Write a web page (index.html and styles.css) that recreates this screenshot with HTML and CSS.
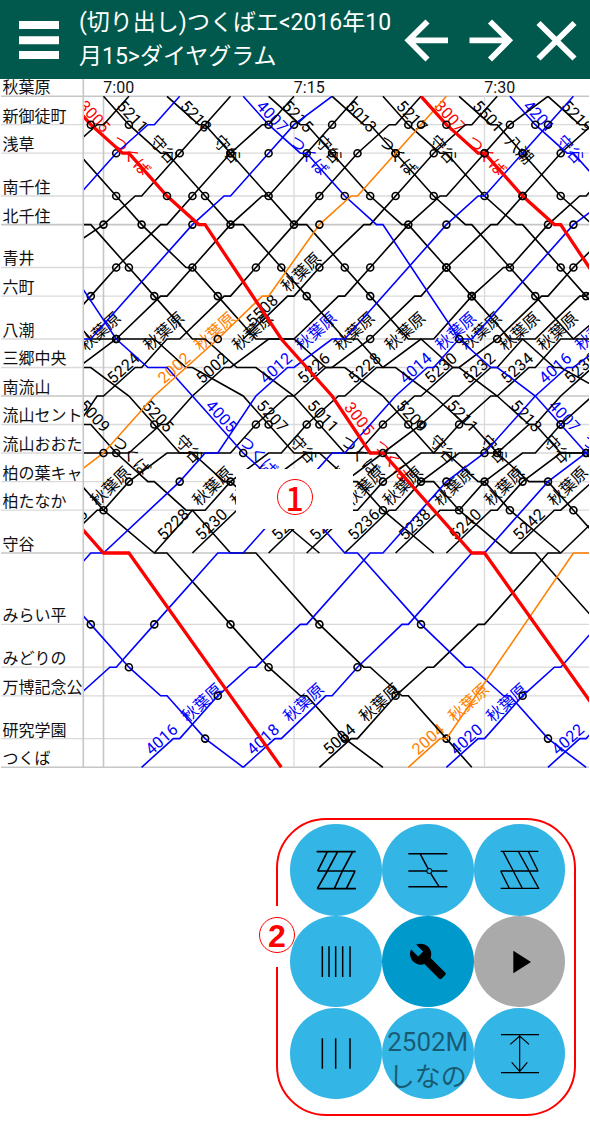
FILE: index.html
```html
<!DOCTYPE html>
<html lang="ja">
<head>
<meta charset="utf-8">
<title>ダイヤグラム</title>
<link rel="stylesheet" href="styles.css">
</head>
<body>
<header class="bar">
  <svg class="bar-menu" viewBox="0 0 40 38"><path d="M0 0h40v8H0zM0 15.2h40v8H0zM0 30h40v8H0z"/></svg>
  <h1 class="bar-title">(切り出し)つくばエ&lt;2016年10<br>月15&gt;ダイヤグラム</h1>
  <svg class="bar-icons" viewBox="0 0 186 78">
    <path d="M44 39.3H4M23.500 20.500L4.500 39.300 23.500 58.500M65.500 39.300H105M86 20.500L105 39.300 86 58.500M134.500 22L170.500 57.500M170.500 22L134.500 57.500"/>
  </svg>
</header>
<main class="page">
  <section class="chart">
    <svg id="diagram" class="diagram" viewBox="0 79 590 700"></svg>
    <div class="note"><span class="mark mark-one">1</span></div>
  </section>
  <section class="panel">
    <span class="panel-tag"><span class="mark mark-two">2</span></span>
    <div class="pad">
      <button class="key"><svg viewBox="0 0 275 275"><path stroke-width="5" d="M80 83H197M83 141H196M82 194H198M112 83L83 141M143 83L112 141 82 194M188 83L157 141 133 194M195 141L169 194"/></svg></button>
      <button class="key"><svg viewBox="0 0 275 275"><path stroke-width="4.500" d="M79 89H196M79 141H134M150 141H196M79 188H196M114 89L138 134M146 148L171 188"/><circle cx="142" cy="141" r="7.500" stroke-width="3"/></svg></button>
      <button class="key"><svg viewBox="0 0 275 275"><path stroke-width="4" d="M80 82H193M80 141H193M80 193H196M87 82L145 193M133 82L194 193M163 82L192 141M80 141L106 193"/></svg></button>
      <button class="key"><svg viewBox="0 0 275 275"><path stroke-width="4.500" d="M97 91V183M117 91V183M137 91V183M158 91V183M180 91V183"/></svg></button>
      <button class="key key-main"><svg viewBox="0 0 275 275"><path class="solid" transform="translate(79.500 77.500) scale(4.870)" d="M22.700 19l-9.100-9.100c.9-2.300.4-5-1.500-6.900-2-2-5-2.400-7.400-1.300L9 6 6 9 1.600 4.700C.4 7.100.9 10.100 2.900 12.100c1.900 1.900 4.600 2.400 6.900 1.500l9.100 9.100c.4.4 1 .4 1.400 0l2.300-2.300c.5-.4.5-1.100.1-1.400z"/></svg></button>
      <button class="key key-off"><svg viewBox="0 0 275 275"><path class="solid" d="M118 104V172L171 138z"/></svg></button>
      <button class="key"><svg viewBox="0 0 275 275"><path stroke-width="4.500" d="M97 91V182M137 91V182M180 91V182"/></svg></button>
      <button class="key key-text">2502M<br>しなの</button>
      <button class="key"><svg viewBox="0 0 275 275"><path stroke-width="3.500" d="M81 80H195M81 194H195M137 82V192M109 109L137 84 165 109M113 163L137 190 160 163"/></svg></button>
    </div>
  </section>
</main>
<script src="diagram.js"></script>
</body>
</html>
```

FILE: styles.css
```css
* { box-sizing: border-box; }
body {
  margin: 0;
  width: 590px;
  height: 1125px;
  overflow: hidden;
  background: #fff;
  font-family: Roboto, "Noto Sans CJK JP", sans-serif;
}
.bar {
  display: flex;
  align-items: center;
  height: 79px;
  background: #00594c;
  color: #fff;
}
.bar-menu { width: 40px; height: 38px; margin-left: 19px; fill: #fff; }
.bar-title {
  flex: 1;
  margin: 0 0 0 20px;
  padding-top: 1px;
  font-size: 23px;
  line-height: 34px;
  font-weight: 400;
  white-space: nowrap;
}
.bar-icons { width: 186px; height: 78px; flex: none; fill: none; stroke: #fff; stroke-width: 5.800; }
.chart { position: relative; height: 700px; }
.diagram { display: block; width: 590px; height: 700px; font-size: 16px; }
.diagram polyline { fill: none; stroke-width: 1.600; }
.diagram .express { stroke-width: 3.300; }
.diagram .stop { fill: none; stroke: #000; stroke-width: 1.600; }
.grid { stroke: #dadada; stroke-width: 1.300; }
.grid-strong { stroke: #c6c6c6; stroke-width: 1.600; }
.station { fill: #111; }
.note {
  position: absolute;
  left: 236px;
  top: 390px;
  width: 117px;
  height: 60px;
  display: flex;
  justify-content: center;
  padding-top: 10px;
  background: #fff;
}
.mark {
  display: flex;
  flex: none;
  align-items: center;
  justify-content: center;
  width: 36px;
  height: 36px;
  border: 1.500px solid #f00;
  border-radius: 50%;
  color: #f00;
  font-size: 32px;
  line-height: 34px;
}
.mark-one { font-family: "Noto Sans CJK JP", sans-serif; font-weight: 500; }
.mark-two { font-family: "Liberation Sans", sans-serif; font-weight: 700; }
.panel {
  position: relative;
  width: 300px;
  height: 298px;
  margin: 39px 0 0 276px;
  padding: 4px 0 0 12px;
  border: 2px solid #f00;
  border-radius: 50px;
}
.panel-tag {
  position: absolute;
  left: -19px;
  top: 86px;
  height: 61px;
  display: flex;
  align-items: center;
  background: linear-gradient(#fff, #fff) 17px 0 / 4px 100% no-repeat;
}
.panel-tag .mark { margin-top: -3px; padding-top: 2px; }
.pad { display: grid; grid-template-columns: repeat(3, 91.900px); grid-auto-rows: 91.800px; }
.panel-tag { z-index: 1; }
.key {
  width: 91.700px;
  height: 91.700px;
  padding: 0;
  border: 0;
  border-radius: 50%;
  background: #33b5e5;
  overflow: hidden;
}
.key svg { display: block; width: 100%; height: 100%; fill: none; stroke: #000; }
.key .solid { fill: #000; stroke: none; }
.key-main { background: #0099cc; }
.key-off { background: #aaa; }
.key-text {
  color: rgba(0, 0, 0, .5);
  font-family: inherit;
  font-size: 26px;
  line-height: 35px;
  white-space: nowrap;
  padding-top: 13px;
}
```

FILE: diagram.js
```javascript
const names = ['秋葉原', '新御徒町', '浅草', '南千住', '北千住', '青井', '六町', '八潮', '三郷中央', '南流山',
  '流山セント', '流山おおた', '柏の葉キャ', '柏たなか', '守谷', 'みらい平', 'みどりの',
  '万博記念公', '研究学園', 'つくば'];
const ys = [96.3, 124.7, 153.2, 196, 224.6, 267.5, 296.1, 339, 367.5, 396, 424.5, 453, 481.6, 510.2, 553,
  624.4, 667.2, 695.8, 738.6, 767.3];
const px = (m) => 103.5 + 12.7 * m;
const K = '#000', B = '#0000ff', R = '#ff0000', O = '#ff8000';

// Each stop is station:minute or station:arrival~departure; a trailing "o" draws a stop mark.
const trains = [
  [K, '2:-3 1:-0.5~0 0:2'],
  [K, '5:-5 4:0o 3:2.5~3 2:6o 1:8o 0:10'],
  [K, '7:-4 6:-1o 5:1o 4:4.5~5 3:7o 2:10o 1:12.5~13 0:15'],
  [K, '9:-5 8:-2 7:1o 6:4.5~5 5:7o 4:10o 3:12.5~13 2:16o 1:18o 0:20'],
  [K, '10:-2 9:-0.5~0 8:2.5~3 7:5~6 6:9.5~10 5:12o 4:15o 3:17o 2:20o 1:22.5~23 0:25'],
  [K, '7:11 6:14.5~15 5:17o 4:20.5~21 3:23o 2:26o 1:28.5~29 0:31'],
  [K, '11:-3~2 10:4.5~5 9:7 8:9.5~10 7:13~15 6:18.5~19 5:21o 4:24o 3:26.5~27 2:30o 1:32o 0:35'],
  [K, '14:-4 13:-0.5~0 12:2o 11:5~10 10:12o 9:14.5~15 8:17.5~18 7:21o 6:24.5~25 5:27o 4:30.5~31 3:33o 2:36o 1:38.5'],
  [K, '14:4 13:7~8 12:10o 11:13~14 10:16o 9:18.5~19 8:21.5~22 7:25~26 6:29o 5:31.5~32 4:35o 3:37.5~38 2:41'],
  [K, '14:7 13:10.5~11 12:13 11:16~20 10:22o 9:24.5~25 8:27.5~28 7:31o 6:34.5~35 5:37o 4:40.5'],
  [K, '14:13 13:16.5~17 12:19 11:22 10:25o 9:27.5~28 8:30.5~31 7:33~34 6:37.5~38 5:40'],
  [K, '14:16 13:19.5~20 12:22o 11:25~26 10:28o 9:30.5~31 8:33.5~34 7:36~37 6:41'],
  [K, '14:19 13:22.5~23 12:25o 11:28~31 10:33.5~34 9:36 8:38.5 7:42'],
  [K, '14:23 13:26.5~28 12:30o 11:33~34 10:36o 9:38.5'],
  [K, '14:27 13:30.5~31 12:33o 11:36~39'],
  [K, '14:32 13:35.5~36 12:38.5'],
  [K, '19:17 18:19.5~20 17:23o 16:25.5~26 15:29.5~30 14:35~36 13:39.5'],
  [K, '12:-2 13:0o 14:4~5 15:10o 16:13o 17:15.5~16 18:19o 19:22'],
  [K, '10:-2~-1 11:1o 12:3.5~4 13:6.5~7 14:10~12 15:17o 16:20.5~21 17:23.5~24 18:27o 19:29'],
  [K, '8:-2~-1 9:2 10:4o 11:6~7 12:9.5~10 13:12.5~13 14:17'],
  [K, '6:-4 7:-1~4 8:6.5~7 9:11 10:13o 11:15~17 12:19.5~20 13:22o 14:26'],
  [K, '4:-2~-1 5:2o 6:4o 7:7~8 8:10.5~12 9:15 10:17o 11:19~23 12:25~26 13:28o 14:32~34 15:39'],
  [K, '2:-2 3:1o 4:3o 5:6.5~7 6:9o 7:12~15 8:17.5~19 9:22 10:24o 11:26~27 12:29.5~30 13:32o 14:36'],
  [K, '0:0 1:2o 2:4.5~5 3:8o 4:10~11 5:14o 6:16o 7:19~20 8:22~23 9:26 10:28.5~29 11:31o 12:33.5~35 13:37o 14:40'],
  [K, '0:5 1:7.5~8 2:10o 3:13o 4:15~16 5:19o 6:21o 7:24~25 8:27.5~28 9:31 10:33.5~34 11:36~38 12:40'],
  [K, '0:13 1:15.5~16 2:18o 3:21o 4:23.5~24 5:27o 6:29o 7:32~33 8:35.5~36 9:40'],
  [K, '0:18 1:20.5~21 2:23o 3:26o 4:28.5~29 5:32o 6:34o 7:37~39'],
  [K, '0:22 1:24o 2:26.5~27 3:30o 4:32.5~33 5:36o 6:38o 7:41'],
  [K, '0:28 1:30.5~31 2:33o 3:36o 4:38.5'],
  [K, '0:35 1:37.5~38 2:40'],
  [B, '3:-2 2:1o 1:3.5~4 0:6'],
  [B, '7:-3~-1 4:7o 3:9.5~10 2:13o 1:15o 0:18'],
  [B, '15:-6 14:-1~0 12:6o 11:8~9 9:12 8:14.5~15 7:18~19 4:27o 3:29.5~30 2:33o 1:35o 0:37'],
  [B, '17:-2 16:0.5~1 15:4o 14:9~11 13:14 12:16 11:18~19 9:23 8:25.5~26 7:28~29 4:37o 3:40'],
  [B, '19:3 18:5.5~6 17:9o 16:11.5~12 15:15.5~16 14:21~22 12:27o 11:30o 9:34 8:36.5~37 7:40'],
  [B, '19:11 18:13.5~14 17:17.5~18 16:20o 15:23.5~24 14:29~30 12:35o 11:38o 9:42'],
  [B, '19:27 18:29.5~30 17:33o 16:35.5~36 15:39'],
  [B, '19:35 18:37.5~38 17:41'],
  [B, '4:-5 7:1o 8:3.5~5 11:11o 12:13.5 13:16 14:19~20 15:25o 16:28.5~29 17:31.5~32 18:35o 19:38'],
  [B, '0:11 1:13o 2:15.5~16 3:19o 4:21.5~22 7:28o 8:30.5~31 9:34 10:36o 11:38o 12:41'],
  [B, '0:32 1:34o 2:36.5~37 3:40'],
  [B, '14:-6 15:-1o 16:2o 17:4.5~5 18:8o 19:11'],
  [O, '12:-3 11:0o 9:4 8:6.5 7:9o 6:12.5~13 4:17o 3:19.5~20 2:23o 1:25o 0:27'],
  [O, '19:24 18:26.5~27 14:37~40'],
  [R, '0:-3 1:-1o 2:1.5~2 3:5o 4:7.5~8 7:14 9:18 11:21~22o 14:29~30 19:42'],
  [R, '0:25 1:27o 2:29.5~30o 3:33o 4:35.5~36 7:42'],
  [R, '11:-7 14:0~2 19:14']
];

// colour, number, destination, station, minute, angle
const up = -42, down = 47;
const A = '秋葉原', M = '守谷', T = 'つくば';
const labels = [
  [R, '3005', T, 0, -3, down], [K, '5211', M, 0, 0, down], [K, '5213', M, 0, 5, down], [B, '4007', T, 0, 11, down],
  [K, '5215', M, 0, 13, down], [K, '5013', T, 0, 18, down], [K, '5217', M, 0, 22, down], [R, '3007', T, 0, 25, down],
  [K, '5501', '八潮', 0, 28, down], [B, '4201', M, 0, 32, down], [K, '5219', '', 0, 35, down],
  [K, '5009', T, 9, -3, down], [K, '5205', M, 9, 2, down], [B, '4005', T, 9, 7, down], [K, '5207', M, 9, 11, down],
  [K, '5011', T, 9, 15, down], [R, '3005', T, 9, 18, 52], [K, '5209', M, 9, 22, down], [K, '5211', M, 9, 26, down],
  [K, '5213', M, 9, 31, down], [B, '4007', T, 9, 34, down],
  [K, '', A, 9, -5, up], [K, '5224', A, 9, 0, up], [O, '2002', A, 9, 4, up], [K, '5002', A, 9, 7, up],
  [B, '4012', A, 9, 12, up], [K, '5226', A, 9, 15, up], [K, '5228', A, 9, 19, up], [B, '4014', A, 9, 23, up],
  [K, '5230', A, 9, 25, up], [K, '5232', A, 9, 28, up], [K, '5234', A, 9, 31, up], [B, '4016', A, 9, 34, up],
  [K, '5236', '', 9, 36, up], [K, '5508', A, 7, 11, -44],
  [K, '5226', A, 14, -4, -44], [K, '5228', A, 14, 4, -44], [K, '5230', A, 14, 7, -44], [K, '5232', A, 14, 13, -44],
  [K, '5234', A, 14, 16, -44], [K, '5236', A, 14, 19, -44], [K, '5238', A, 14, 23, -44], [K, '5240', A, 14, 27, -44],
  [K, '5242', A, 14, 32, -44],
  [B, '4016', A, 19, 3, up], [B, '4018', A, 19, 11, up], [K, '5004', A, 19, 17, up], [O, '2004', A, 19, 24, up],
  [B, '4020', A, 19, 27, up], [B, '4022', '', 19, 35, up]
];

let out = '<defs><clipPath id="plot"><rect x="84" y="96" width="505" height="673"/></clipPath>' +
  '<clipPath id="side"><rect x="0" y="79" width="82.500" height="700"/></clipPath></defs>';
const strong = [0, 4, 9, 14, 19];
ys.forEach((y, i) => {
  out += `<line class="${strong.includes(i) ? 'grid grid-strong' : 'grid'}" x1="1" x2="589" y1="${y}" y2="${y}"/>`;
});
out += '<path class="grid-strong" d="M83.300 79V767M103.500 96V767"/><path class="grid" d="M294 96V767M484.500 96V767"/>';
out += '<g class="station" clip-path="url(#side)">' +
  names.map((n, i) => `<text x="2.500" y="${ys[i] - 3.1}">${n}</text>`).join('') + '</g>';
out += ['7:00', '7:15', '7:30'].map((t, i) => `<text class="station" x="${103.3 + 190.5 * i}" y="93">${t}</text>`).join('');

out += '<g clip-path="url(#plot)">';
for (const [color, no, dest, st, m, angle] of labels) {
  out += `<g fill="${color}" transform="translate(${px(m)} ${ys[st]}) rotate(${angle})">` +
    `<text x="${angle > 0 ? 16 : 15}" y="-2" textLength="37">${no}</text><text x="64" y="-2">${dest}</text></g>`;
}
for (const [color, route] of trains) {
  const points = [];
  let marks = '';
  for (const stop of route.split(' ')) {
    const [st, time] = stop.split(':');
    const times = time.replace('o', '').split('~');
    times.forEach((t) => points.push(`${px(+t)},${ys[st]}`));
    if (time.endsWith('o')) {
      marks += `<circle class="stop" cx="${px(+times[times.length - 1])}" cy="${ys[st]}" r="3.500"/>`;
    }
  }
  out += `<polyline class="${color === R ? 'express' : ''}" stroke="${color}" points="${points.join(' ')}"/>${marks}`;
}
out += '</g>';
document.getElementById('diagram').innerHTML = out;
```
